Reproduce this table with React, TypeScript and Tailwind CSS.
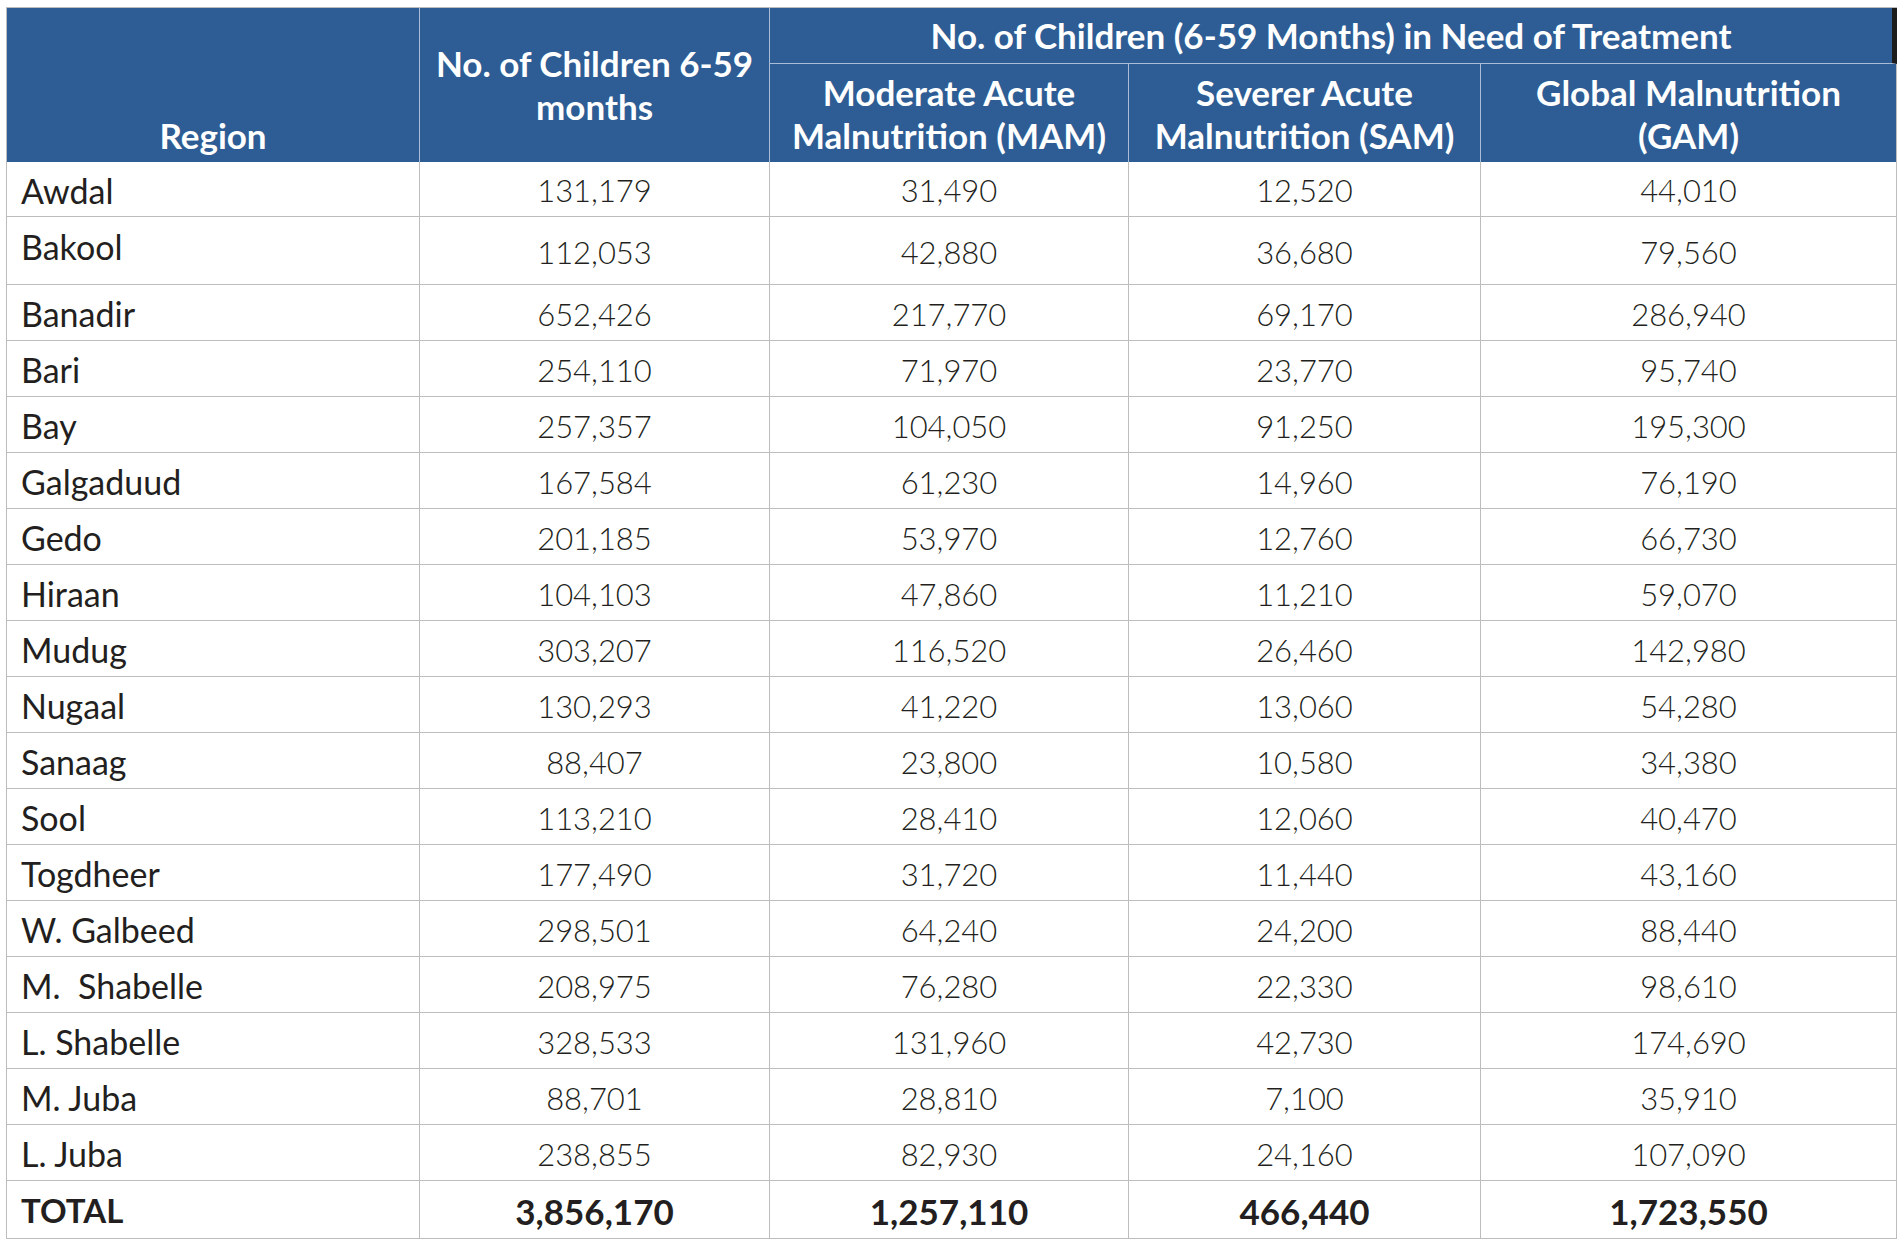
import React from 'react';

type Row = {
  region: string;
  children: string;
  mam: string;
  sam: string;
  gam: string;
  h: string;
  top?: boolean;
};

const rows: Row[] = [
  { region: 'Awdal', children: '131,179', mam: '31,490', sam: '12,520', gam: '44,010', h: 'h-[55px]' },
  { region: 'Bakool', children: '112,053', mam: '42,880', sam: '36,680', gam: '79,560', h: 'h-[68px]', top: true },
  { region: 'Banadir', children: '652,426', mam: '217,770', sam: '69,170', gam: '286,940', h: 'h-[56px]' },
  { region: 'Bari', children: '254,110', mam: '71,970', sam: '23,770', gam: '95,740', h: 'h-[56px]' },
  { region: 'Bay', children: '257,357', mam: '104,050', sam: '91,250', gam: '195,300', h: 'h-[56px]' },
  { region: 'Galgaduud', children: '167,584', mam: '61,230', sam: '14,960', gam: '76,190', h: 'h-[56px]' },
  { region: 'Gedo', children: '201,185', mam: '53,970', sam: '12,760', gam: '66,730', h: 'h-[56px]' },
  { region: 'Hiraan', children: '104,103', mam: '47,860', sam: '11,210', gam: '59,070', h: 'h-[56px]' },
  { region: 'Mudug', children: '303,207', mam: '116,520', sam: '26,460', gam: '142,980', h: 'h-[56px]' },
  { region: 'Nugaal', children: '130,293', mam: '41,220', sam: '13,060', gam: '54,280', h: 'h-[56px]' },
  { region: 'Sanaag', children: '88,407', mam: '23,800', sam: '10,580', gam: '34,380', h: 'h-[56px]' },
  { region: 'Sool', children: '113,210', mam: '28,410', sam: '12,060', gam: '40,470', h: 'h-[56px]' },
  { region: 'Togdheer', children: '177,490', mam: '31,720', sam: '11,440', gam: '43,160', h: 'h-[56px]' },
  { region: 'W. Galbeed', children: '298,501', mam: '64,240', sam: '24,200', gam: '88,440', h: 'h-[56px]' },
  { region: 'M.\u00a0 Shabelle', children: '208,975', mam: '76,280', sam: '22,330', gam: '98,610', h: 'h-[56px]' },
  { region: 'L. Shabelle', children: '328,533', mam: '131,960', sam: '42,730', gam: '174,690', h: 'h-[56px]' },
  { region: 'M. Juba', children: '88,701', mam: '28,810', sam: '7,100', gam: '35,910', h: 'h-[56px]' },
  { region: 'L. Juba', children: '238,855', mam: '82,930', sam: '24,160', gam: '107,090', h: 'h-[56px]' },
];

const cols = 'grid grid-cols-[413px_350px_359px_352px_416px]';
const cell = 'border-r border-b border-[#bdbdbd] flex items-center justify-center pt-[3px]';

export default function App() {
  return (
    <div className="min-h-screen bg-white pl-[6px] pt-[7px] font-['Lato',sans-serif] text-[#231f20]">
      <div className="w-[1891px] border-t border-l border-[#bdbdbd]">
        {/* header */}
        <div className={`${cols} grid-rows-[56px_98px] bg-[#2d5d94] text-white font-bold text-[35px] leading-[43px]`}>
          <div className="row-span-2 border-r border-[#a9bdd6] flex items-end justify-center pb-[5px]">
            Region
          </div>
          <div className="row-span-2 border-r border-[#a9bdd6] flex items-center justify-center text-center">
            No. of Children 6-59
            <br />
            months
          </div>
          <div className="col-span-3 border-b border-[#a9bdd6] border-r-[5px] border-r-[#1c1c1c] flex items-center justify-center">
            No. of Children (6-59 Months) in Need of Treatment
          </div>
          <div className="border-r border-[#a9bdd6] flex items-center justify-center text-center pt-[2px]">
            Moderate Acute
            <br />
            Malnutrition (MAM)
          </div>
          <div className="border-r border-[#a9bdd6] flex items-center justify-center text-center pt-[2px]">
            Severer Acute
            <br />
            Malnutrition (SAM)
          </div>
          <div className="border-r border-[#bdbdbd] flex items-center justify-center text-center pt-[2px]">
            Global Malnutrition
            <br />
            (GAM)
          </div>
        </div>

        {/* body */}
        {rows.map((r) => (
          <div key={r.region} className={`${cols} text-[31px] leading-none font-light`}>
            <div
              className={`${r.h} border-r border-b border-[#bdbdbd] flex pl-[14px] text-[34px] font-normal ${
                r.top ? 'items-start pt-[13px]' : 'items-center pt-[3px]'
              }`}
            >
              {r.region}
            </div>
            <div className={`${r.h} ${cell}`}>{r.children}</div>
            <div className={`${r.h} ${cell}`}>{r.mam}</div>
            <div className={`${r.h} ${cell}`}>{r.sam}</div>
            <div className={`${r.h} ${cell}`}>{r.gam}</div>
          </div>
        ))}

        <div className={`${cols} text-[35px] leading-none font-bold`}>
          <div className="h-[58px] border-r border-b border-[#bdbdbd] flex items-center pl-[14px] pt-[2px] text-[33px]">
            TOTAL
          </div>
          <div className={`h-[58px] ${cell}`}>3,856,170</div>
          <div className={`h-[58px] ${cell}`}>1,257,110</div>
          <div className={`h-[58px] ${cell}`}>466,440</div>
          <div className={`h-[58px] ${cell}`}>1,723,550</div>
        </div>
      </div>
    </div>
  );
}
